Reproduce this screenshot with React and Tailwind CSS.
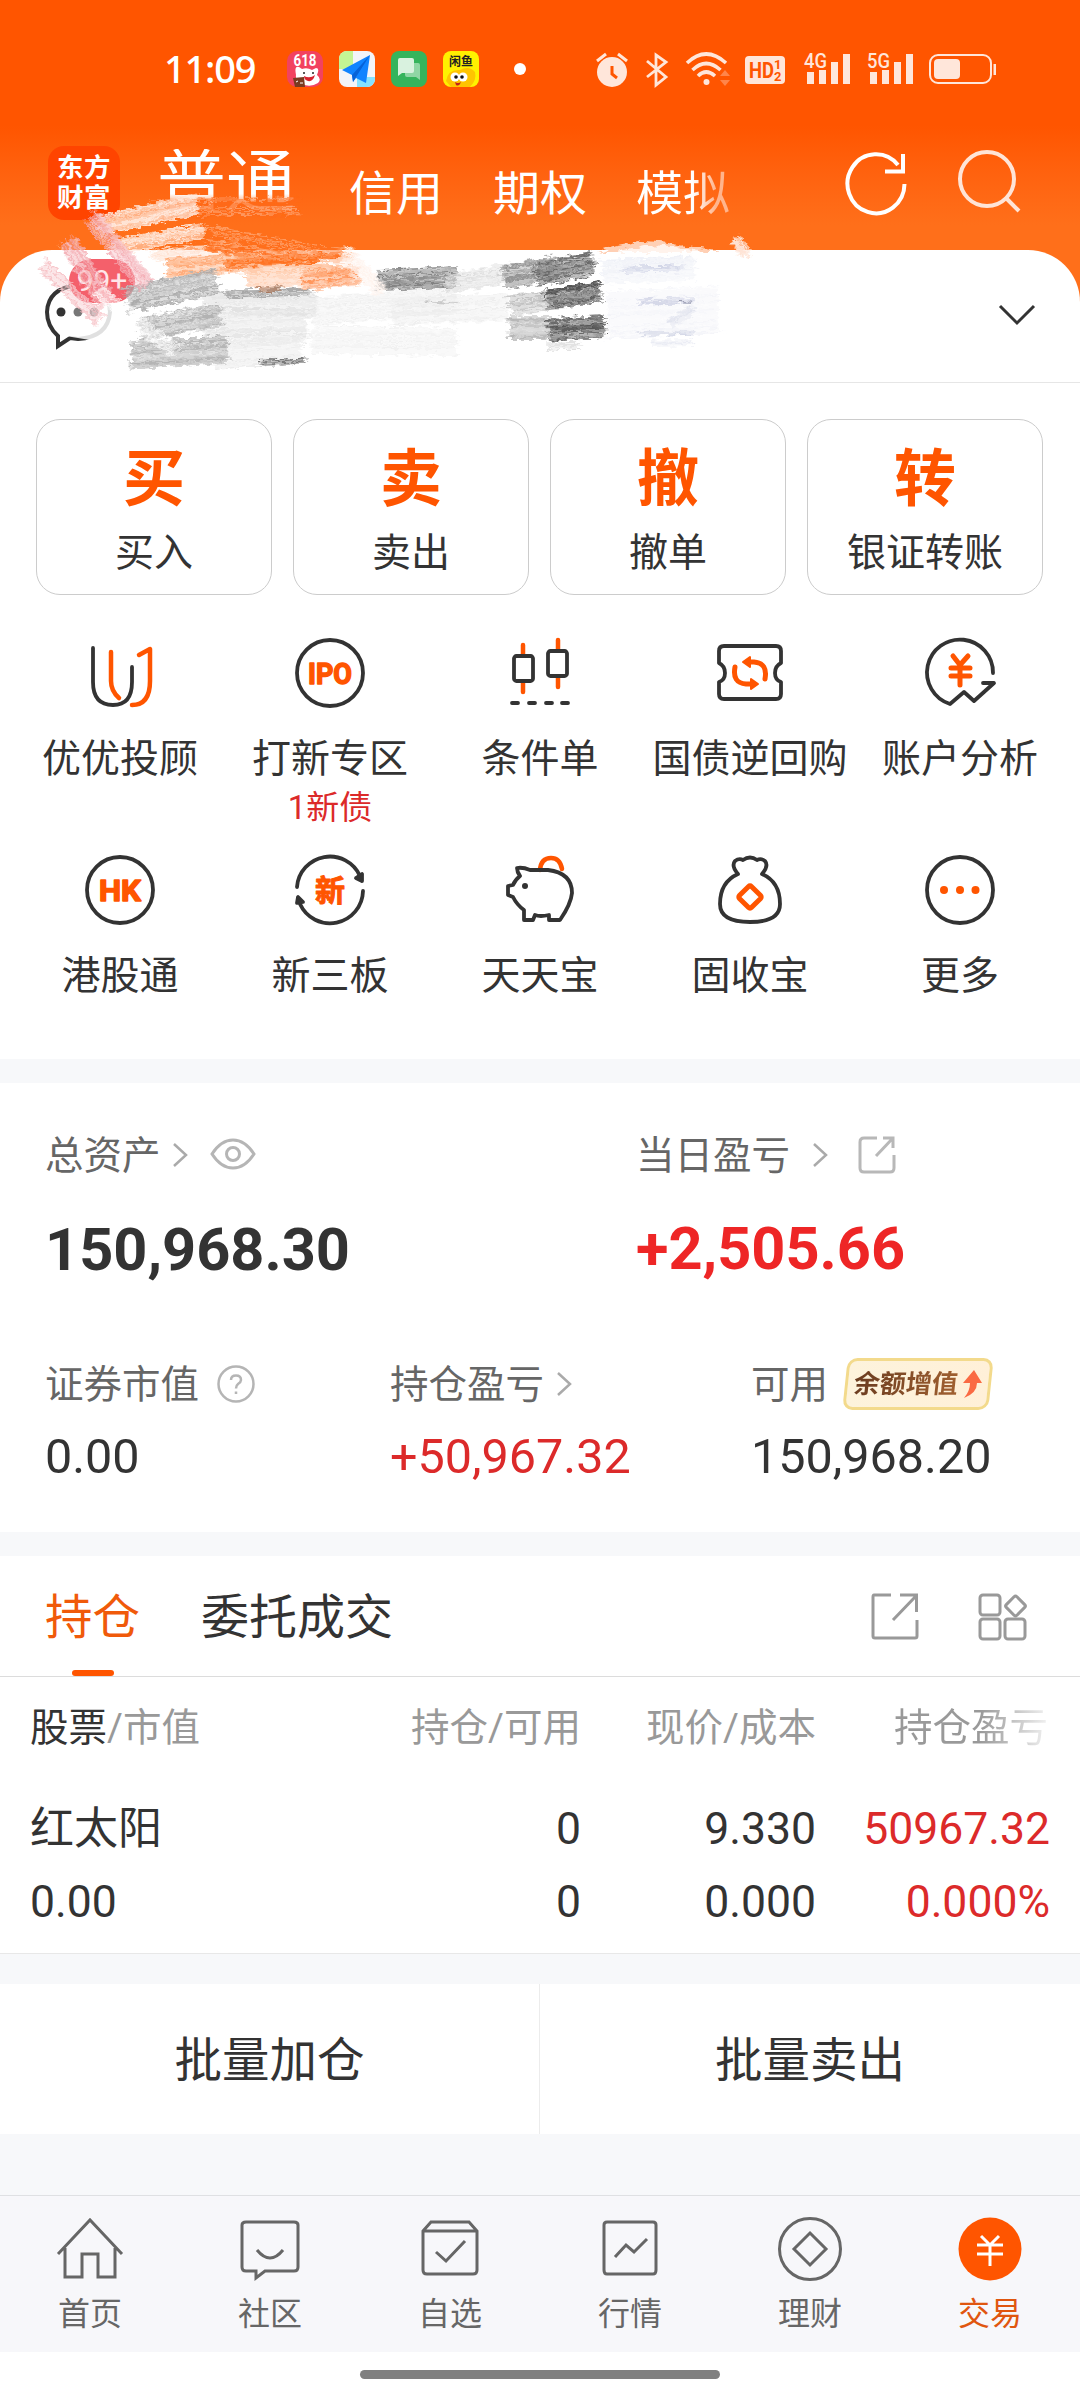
import React from "react";

const DARK = "#333333";
const ORANGE = "#ff5500";

const tradeButtons = [
    { glyph: "买", label: "买入" },
    { glyph: "卖", label: "卖出" },
    { glyph: "撤", label: "撤单" },
    { glyph: "转", label: "银证转账" },
];

/* ---------- Status bar ---------- */

function StatusBar() {
    return (
        <div className="h-[126px] flex items-start pt-[50px] pl-[164px] text-white">
            <span className="w-[123px] h-[36px] flex items-center font-['Noto_Sans'] font-medium text-[38px] tracking-[-1.2px] leading-none">11:09</span>

            {/* Notification icons */}
            <div className="flex gap-4 pt-[1px]">
                <svg width="36" height="36" viewBox="0 0 36 36">
                    <rect width="36" height="36" rx="10" fill="#f2425f" />
                    <text x="18" y="15" fontSize="16" fontWeight="bold" fontFamily="Roboto" textAnchor="middle" fill="#fff" textLength="23" lengthAdjust="spacingAndGlyphs">618</text>
                    <path d="M9 24 Q7 14 12 16 L15 18 Q20 16 25 19 L29 17 Q33 17 30 24 Q35 28 31 32 Q23 37 15 33 Q8 30 9 24Z" fill="#fff" />
                    <circle cx="17" cy="22" r="1" fill="#222" />
                    <circle cx="26" cy="22" r="1" fill="#222" />
                    <path d="M17 25 Q23 28 28 24 Q26 31 21 30 Q17 29 17 25Z" fill="#d8232f" />
                    <path d="M6 27 L17 26 L18 36 L8 36Z" fill="#7a3a20" />
                    <path d="M9 31 l2 -1 M13 32 h3" stroke="#fff" strokeWidth="1" />
                </svg>
                <svg width="36" height="36" viewBox="0 0 36 36">
                    <defs>
                        <clipPath id="mapClip"><rect width="36" height="36" rx="8" /></clipPath>
                    </defs>
                    <g clipPath="url(#mapClip)">
                        <rect width="36" height="36" fill="#f3f4f8" />
                        <rect width="14" height="18" fill="#c4f594" />
                        <rect x="18" y="26" width="18" height="10" fill="#85e2ff" />
                        <path d="M31 4 L3 19 L13 24 L14 31 L17 27 L27 32Z" fill="#1083ff" />
                        <path d="M31 4 L13 24 L14 31 L17 26Z" fill="#0662d8" />
                    </g>
                </svg>
                <svg width="36" height="36" viewBox="0 0 36 36">
                    <rect width="36" height="36" rx="8" fill="#35b45c" />
                    <path d="M14 12 h13 q2 0 2 2 v15 l-4 -3 h-9 q-2 0 -2 -2z" fill="#8fd6a4" />
                    <path d="M9 7 h12 q2 0 2 2 v11 q0 2 -2 2 h-10 l-4 3 v-16 q0 -2 2 -2z" fill="#d9f2df" />
                </svg>
                <svg width="36" height="36" viewBox="0 0 36 36">
                    <rect width="36" height="36" rx="8" fill="#fff100" />
                    <path d="M3 30 Q5 18 17 19 Q26 14 32 21 Q34 29 27 36 L8 36Z" fill="#ffc400" />
                    <text x="18" y="15" fontSize="12" fontWeight="bold" fontFamily="Noto Sans CJK SC" textAnchor="middle" fill="#222">闲鱼</text>
                    <circle cx="12" cy="26" r="4.5" fill="#fff" />
                    <circle cx="20" cy="26" r="4.5" fill="#fff" />
                    <circle cx="13" cy="26" r="1.8" fill="#111" />
                    <circle cx="19" cy="26" r="1.8" fill="#111" />
                    <path d="M12 31 Q15 33 18 31 Q16 36 13 34Z" fill="#c02020" />
                </svg>
            </div>
            <span className="size-3 rounded-full bg-white mt-[13px] ml-[35px]" />

            {/* System icons */}
            <svg className="ml-[66px]" width="408" height="40" viewBox="592 50 408 40" fill="none" stroke="#ffe6da">
                <circle cx="612" cy="72" r="15" fill="#ffe6da" stroke="none" />
                <path d="M597 61 l9 -7 M627 61 l-9 -7" strokeWidth="3" />
                <path d="M612 66 v8 l5 4" stroke={ORANGE} strokeWidth="3" />
                <path d="M647 61 L666 77 L656 85 V55 L666 62 L647 77" strokeWidth="2.8" />
                <path d="M687 63 Q706 45 726 63 M692.500 70 Q706 57 720.500 70 M698 76 Q706 68 715 76" strokeWidth="3.600" />
                <circle cx="706.500" cy="82" r="3" fill="#ffe6da" stroke="none" />
                <path d="M720 76 l5 -6 l5 6z M720 80 l5 6 l5 -6z" fill="#ff854a" stroke="none" />
                <rect x="745" y="56" width="40" height="28" rx="4" fill="#ffe6da" stroke="none" />
                <g fill={ORANGE} stroke="none" fontFamily="Roboto" fontWeight="bold">
                    <text x="749" y="78" fontSize="22" textLength="25" lengthAdjust="spacingAndGlyphs">HD</text>
                    <text x="774" y="69" fontSize="13">1</text>
                    <text x="774" y="81" fontSize="13">2</text>
                </g>
                <g fill="#ffe6da" stroke="none">
                    <g fontFamily="Roboto" fontWeight="500" fontSize="21">
                        <text x="804" y="67.500" textLength="23" lengthAdjust="spacingAndGlyphs">4G</text>
                        <text x="867" y="67.500" textLength="23" lengthAdjust="spacingAndGlyphs">5G</text>
                    </g>
                    <path d="M807 72 h7 v12 h-7z M819 70 h7 v14 h-7z M831 62 h7 v22 h-7z M843 54 h7 v30 h-7z" />
                    <path d="M870 72 h7 v12 h-7z M882 70 h7 v14 h-7z M894 62 h7 v22 h-7z M906 54 h7 v30 h-7z" />
                    <rect x="934" y="59" width="26" height="20" rx="4" />
                    <rect x="993.500" y="64" width="2.500" height="11" />
                </g>
                <rect x="930" y="55" width="61" height="28" rx="8" strokeWidth="2" />
            </svg>
        </div>
    );
}

/* ---------- App bar ---------- */

function AppBar() {
    return (
        <div className="h-[124px] flex items-start pl-12 text-white bg-gradient-to-b from-[#ff5500] to-[#ff6f1a] to-80%">
            <div className="w-[72px] h-[74px] mt-5 rounded-[16px] bg-[#ff4400] flex flex-col items-center justify-center font-bold text-[26.5px] leading-[30px] tracking-[0.5px]">
                <span>东方</span>
                <span>财富</span>
            </div>
            <span className="ml-[37px] mt-[23px] text-[69px] leading-[69px] text-transparent bg-clip-text bg-linear-to-b from-white from-65% to-[#ff9a62] to-80%">普通</span>
            <span className="ml-[54px] mt-[44px] text-[47px] leading-[47px]">信用</span>
            <span className="ml-[50px] mt-[44px] text-[47px] leading-[47px]">期权</span>
            <span className="ml-[49px] mt-[44px] text-[47px] leading-[47px] text-transparent bg-clip-text bg-linear-to-r from-white from-60% to-[#ffb48c] to-85%">模拟</span>

            <svg className="ml-[112px] mt-[22px]" width="66" height="70" viewBox="842 148 66 70" fill="none" stroke="#fff" strokeWidth="4">
                <path d="M904.500 184 A28.500 29.500 0 1 1 898 165" />
                <path d="M903 154 V171.500 H885" />
            </svg>
            <svg className="ml-[46px] mt-[22px]" width="70" height="70" viewBox="954 148 70 70" fill="none" stroke="#ffe4d6" strokeWidth="4">
                <circle cx="987" cy="179" r="27" />
                <path d="M1006 198 L1019 211" />
            </svg>
        </div>
    );
}

/* ---------- Scribble over the account row ---------- */

// [x1, y1, x2, y2, width, colour, opacity, density]
const strokes = [
    [150, 209, 300, 207, 20, "#ff6a1a", 0.6, 1],
    [98, 226, 200, 204, 20, "#ffe9dd", 0.9, 1.2],
    [112, 248, 204, 231, 18, "#ffeade", 0.85, 1.1],
    [150, 256, 240, 246, 12, "#ffe0ce", 0.8, 0.8],
    [205, 238, 340, 262, 26, "#ff6f1d", 0.9, 1.1],
    [165, 268, 262, 261, 20, "#ff9a5e", 0.7, 1],
    [225, 264, 352, 256, 14, "#ff711f", 0.95, 1.3],
    [245, 277, 352, 274, 24, "#ffc9a8", 0.85, 1.1],
    [300, 282, 362, 276, 20, "#ff8440", 0.55, 1],
    [318, 262, 384, 260, 6, "#ffffff", 0.95, 1],
    [200, 302, 318, 304, 26, "#dedede", 0.7, 1.1],
    [205, 328, 308, 326, 34, "#e3e3e3", 0.7, 1.1],
    [212, 356, 302, 348, 30, "#ebebeb", 0.8, 1],
    [225, 295, 312, 291, 9, "#a0a0a0", 0.8, 1.2],
    [258, 290, 282, 288, 5, "#a86a48", 0.8, 1],
    [125, 300, 218, 281, 25, "#a8a8a8", 0.85, 1.6],
    [138, 330, 222, 313, 23, "#b0b0b0", 0.85, 1.6],
    [130, 356, 228, 349, 27, "#b0b0b0", 0.85, 1.6],
    [260, 363, 306, 360, 7, "#777777", 0.95, 1.6],
    [310, 312, 458, 300, 30, "#ebebeb", 0.6, 0.7],
    [310, 340, 458, 342, 30, "#eeeeee", 0.6, 0.7],
    [390, 312, 510, 306, 28, "#e9e9e9", 0.6, 0.5],
    [420, 301, 460, 304, 4, "#b9b9b9", 0.6, 0.8],
    [376, 280, 458, 276, 22, "#7d7d7d", 0.9, 1.5],
    [445, 284, 520, 272, 22, "#dddddd", 0.8, 1],
    [502, 278, 560, 267, 24, "#8e8e8e", 0.85, 1.5],
    [535, 275, 594, 262, 24, "#666666", 0.9, 1.6],
    [508, 306, 560, 299, 22, "#bcbcbc", 0.8, 1.1],
    [545, 300, 602, 291, 22, "#545454", 0.95, 1.7],
    [508, 328, 560, 328, 26, "#b0b0b0", 0.8, 1.1],
    [548, 330, 606, 327, 24, "#545454", 0.95, 1.7],
    [545, 346, 580, 346, 7, "#d8d8d8", 0.8, 0.8],
    [602, 272, 696, 268, 24, "#eef0f7", 0.8, 0.8],
    [618, 270, 682, 268, 6, "#cfd3e6", 0.8, 1],
    [606, 316, 720, 310, 48, "#f3f4f9", 0.7, 0.6],
    [638, 302, 698, 300, 8, "#d3d6e7", 0.8, 0.9],
    [672, 302, 692, 302, 2, "#888ba0", 0.8, 1],
    [668, 326, 694, 308, 12, "#dcdfeb", 0.6, 0.6],
    [636, 333, 696, 333, 5, "#cfd3e4", 0.8, 0.9],
    [650, 344, 694, 343, 8, "#e8eaf3", 0.8, 0.8],
    [735, 238, 748, 256, 14, "#ffe4d6", 0.95, 1.4],
    [344, 250, 384, 294, 16, "#fff4ee", 0.9, 1],
    [90, 216, 148, 286, 20, "#f3a9b1", 0.75, 1.2],
    [66, 240, 108, 306, 20, "#f3a9b0", 0.75, 1.2],
    [42, 264, 100, 320, 16, "#f6bcc1", 0.7, 1],
    [96, 290, 176, 352, 13, "#ffffff", 0.7, 0.9],
];

function makeRandom(seed) {
    let s = seed;
    return () => {
        s = (s * 16807) % 2147483647;
        return s / 2147483647;
    };
}

function BrushStroke({ stroke, seed }) {
    const [x1, y1, x2, y2, width, color, opacity, density] = stroke;
    const rand = makeRandom(seed * 7919 + 13);
    const len = Math.hypot(x2 - x1, y2 - y1);
    const angle = (Math.atan2(y2 - y1, x2 - x1) * 180) / Math.PI;
    const count = Math.round(width * density);
    // bristles are split in three layers so that they differ in strength
    const layers = ["", "", ""];
    for (let i = 0; i < count; i++) {
        const y = (rand() - 0.5) * width;
        const a = rand() * 10 - 3;
        const b = len - rand() * 9 + 3;
        layers[i % 3] += `M${a.toFixed(1)} ${y.toFixed(1)}L${b.toFixed(1)} ${(y + rand() * 2 - 1).toFixed(1)}`;
    }
    return (
        <g transform={`translate(${x1} ${y1}) rotate(${angle})`} stroke={color} fill={color} strokeWidth="1">
            <rect x="2" y={-width / 2 + 1} width={Math.max(len - 4, 2)} height={width - 2} stroke="none" opacity={opacity * 0.6} />
            <path d={layers[0]} opacity={opacity} />
            <path d={layers[1]} opacity={opacity * 0.6} />
            <path d={layers[2]} stroke="#fff" opacity="0.3" />
        </g>
    );
}

function Scribble() {
    return (
        <svg className="absolute left-0 top-0 pointer-events-none" width="1080" height="400" viewBox="0 0 1080 400">
            <defs>
                <filter id="bristle" x="0" y="0" width="1080" height="400" filterUnits="userSpaceOnUse">
                    <feTurbulence type="fractalNoise" baseFrequency="0.12 0.3" numOctaves="2" seed="4" result="noise" />
                    <feDisplacementMap in="SourceGraphic" in2="noise" scale="9" xChannelSelector="R" yChannelSelector="G" />
                </filter>
            </defs>
            <g filter="url(#bristle)">
                <path d="M598 252 L612 247 L628 244 L640 241 L662 242 L680 245 L700 248 L722 252Z" fill="#ffd0b5" />
                <path d="M615 252 L645 245 L670 246 L705 252Z" fill="#fff3ec" />
                {strokes.map((stroke, i) => (
                    <BrushStroke key={i} stroke={stroke} seed={i + 1} />
                ))}
            </g>
        </svg>
    );
}

function AccountRow() {
    return (
        <div className="h-[133px] border-b border-[#e6e6e6] flex items-start justify-between">
            <svg width="160" height="132" viewBox="0 250 160 132">
                <path d="M58 336 Q47 326 47 312 Q48 288 78 285 Q109 288 110 312 Q108 337 78 339 L70 338 L58 346Z" fill="none" stroke={DARK} strokeWidth="4" />
                <path d="M84 325 L114 292 L120 345 L66 336Z" fill="#fff" opacity="0.85" />
                <circle cx="61" cy="312" r="4.500" fill={DARK} />
                <circle cx="78" cy="312" r="4.500" fill="#777" />
                <circle cx="94" cy="312" r="4.500" fill="#999" />
                <rect x="69" y="259" width="66" height="44" rx="22" fill="#f4606b" />
                <text x="102" y="291" fontSize="30" textAnchor="middle" fill="#ffe5e8" fontFamily="Roboto">99+</text>
            </svg>
            <svg className="mr-[43px] mt-[52px]" width="40" height="26" viewBox="0 0 40 26" fill="none" stroke={DARK} strokeWidth="3">
                <path d="M3 4 L20 21 L37 4" />
            </svg>
        </div>
    );
}

/* ---------- Quick entries ---------- */

function Icon({ children }) {
    return (
        <svg width="76" height="76" viewBox="-38 -38 76 76" fill="none" stroke={DARK} strokeWidth="3.800" strokeLinecap="round" strokeLinejoin="round">
            {children}
        </svg>
    );
}

const entries = [
    {
        label: "优优投顾",
        icon: (
            <>
                <path d="M-27 -25 V9 Q-27 32 -7 32 Q12 32 12 9 V-6" />
                <path d="M-9 -21 V8 Q-9 18 -1 25" stroke={ORANGE} strokeWidth="4.500" />
                <path d="M19 -18 L30 -24 V8 Q30 32 12 32" stroke={ORANGE} strokeWidth="4.500" />
            </>
        ),
    },
    {
        label: "打新专区",
        note: "1新债",
        icon: (
            <>
                <circle r="33" />
                <text y="11" fontSize="30" fontWeight="bold" fontFamily="Roboto" textAnchor="middle" textLength="44" lengthAdjust="spacingAndGlyphs" fill={ORANGE} stroke={ORANGE} strokeWidth="1.500">IPO</text>
            </>
        ),
    },
    {
        label: "条件单",
        icon: (
            <>
                <path d="M-17 -28 V19 M18 -33 V14" stroke={ORANGE} strokeWidth="4.500" />
                <rect x="-26" y="-17" width="19" height="25" rx="2.500" fill="#fff" />
                <rect x="8" y="-22" width="19" height="25" rx="2.500" fill="#fff" />
                <path d="M-28 30 h6 M-11 30 h6 M6 30 h6 M22 30 h6" />
            </>
        ),
    },
    {
        label: "国债逆回购",
        icon: (
            <>
                <path d="M-26 -27 H26 Q31 -27 31 -22 V-10 Q25 -7 25 0 Q25 7 31 9 V21 Q31 26 26 26 H-26 Q-31 26 -31 21 V9 Q-25 7 -25 0 Q-25 -7 -31 -10 V-22 Q-31 -27 -26 -27Z" />
                <path d="M-15 -6 Q-18 10 -4 11 H1 M-1 -11 H4 Q18 -10 15 6" stroke={ORANGE} strokeWidth="5" />
                <path d="M-7 -11 L0 -16 V-6Z M8 11 L1 6 V16Z" fill={ORANGE} stroke={ORANGE} strokeWidth="2" />
            </>
        ),
    },
    {
        label: "账户分析",
        icon: (
            <>
                <path d="M33 0 A33 33 0 1 0 -10 31 L4 19 L14 28 L34 10 H23" />
                <path d="M-7 -17 L0 -8 L8 -17 M0 -8 V12 M-9 -5 H10 M-9 3 H10" stroke={ORANGE} strokeWidth="5" />
            </>
        ),
    },
    {
        label: "港股通",
        icon: (
            <>
                <circle r="33" />
                <text y="11" fontSize="30" fontWeight="bold" fontFamily="Roboto" textAnchor="middle" textLength="42" lengthAdjust="spacingAndGlyphs" fill={ORANGE} stroke={ORANGE} strokeWidth="1.500">HK</text>
            </>
        ),
    },
    {
        label: "新三板",
        icon: (
            <>
                <path d="M-33 -3 A33 33 0 0 1 30 -14 M33 1 A33 33 0 0 1 -30 14" />
                <path d="M32 -9 L26 -12 L32 -16Z M-32 7 L-33 13 L-27 12Z" fill={DARK} />
                <text y="11" fontSize="30" fontWeight="bold" fontFamily="Noto Sans CJK SC" textAnchor="middle" fill={ORANGE} stroke={ORANGE} strokeWidth="1">新</text>
            </>
        ),
    },
    {
        label: "天天宝",
        icon: (
            <>
                <path d="M0 -20 Q1 -32 11 -32 Q20 -32 22 -21" stroke={ORANGE} strokeWidth="4.500" />
                <path d="M-10 -20 H8 Q32 -17 32 3 Q31 14 20 30 H9 V25 Q0 27 -5 25 L-7 30 H-16 V20 Q-23 15 -27 7 L-32 5 V-4 L-27 -5 Q-25 -10 -20 -14 Q-23 -18 -23 -22 Q-17 -23 -10 -20Z" />
                <circle cx="-15" cy="-4" r="3" fill={DARK} stroke="none" />
            </>
        ),
    },
    {
        label: "固收宝",
        icon: (
            <>
                <path d="M-12 -16 Q-19 -24 -15 -29 Q-11 -32 -7 -30 Q0 -35 7 -30 Q11 -32 15 -29 Q19 -24 12 -16 Q30 -8 30 14 Q30 32 0 32 Q-30 32 -30 14 Q-30 -8 -12 -16Z" />
                <rect x="-8.500" y="-8.500" width="17" height="17" rx="2" transform="translate(0 7) rotate(45)" stroke={ORANGE} strokeWidth="5" />
            </>
        ),
    },
    {
        label: "更多",
        icon: (
            <>
                <circle r="33" />
                <g fill={ORANGE} stroke="none">
                    <circle cx="-16" r="4" />
                    <circle r="4" />
                    <circle cx="15.500" r="4" />
                </g>
            </>
        ),
    },
];

function QuickEntries() {
    return (
        <div className="grid grid-cols-5 px-[15px] pt-[40px]">
            {entries.map((entry) => (
                <div key={entry.label} className="h-[217px] flex flex-col items-center text-[#333333] whitespace-nowrap">
                    <Icon>{entry.icon}</Icon>
                    <span className="mt-[29px] text-[39px] leading-[39px]">{entry.label}</span>
                    {entry.note && <span className="mt-[12px] text-[33px] leading-[33px] text-[#dc2a2a]">{entry.note}</span>}
                </div>
            ))}
        </div>
    );
}

/* ---------- Assets ---------- */

function Chevron({ className }) {
    return (
        <svg className={className} width="16" height="26" viewBox="0 0 16 26" fill="none" stroke="#aaaaaa" strokeWidth="2.500">
            <path d="M2 2 L14 13 L2 24" />
        </svg>
    );
}

function Assets() {
    return (
        <section className="h-[449px] bg-white pt-[52px] text-[38.500px] leading-[39px] text-[#666666]">
            <div className="flex px-[45px]">
                <div className="w-[591px]">
                    <div className="flex items-center h-[40px]">
                        <span>总资产</span>
                        <Chevron className="ml-[11px]" />
                        <svg className="ml-[22px]" width="46" height="34" viewBox="0 0 46 34" fill="none" stroke="#b5b5b5" strokeWidth="3">
                            <path d="M2 16 Q11 2 23 2 Q35 2 44 16 Q35 30 23 30 Q11 30 2 16Z" />
                            <circle cx="23" cy="16" r="6.500" />
                        </svg>
                    </div>
                    <div className="mt-[45px] text-[59.500px] leading-[60px] font-bold text-[#333333]">150,968.30</div>
                </div>
                <div>
                    <div className="flex items-center h-[40px]">
                        <span>当日盈亏</span>
                        <Chevron className="ml-[22px]" />
                        <svg className="ml-[30px]" width="38" height="40" viewBox="0 0 38 40" fill="none" stroke="#b8b8b8" strokeWidth="3">
                            <path d="M19 3 H6 Q2 3 2 7 V33 Q2 37 6 37 H32 Q36 37 36 33 V20 M25 3 H35 V13 M35 3 L18 21" />
                        </svg>
                    </div>
                    <div className="mt-[44px] text-[59.500px] leading-[60px] font-bold text-[#ee2626]">+2,505.66</div>
                </div>
            </div>

            <div className="flex pl-[45px] pt-[78px]">
                <div className="w-[345px]">
                    <div className="flex items-center h-[52px]">
                        <span>证券市值</span>
                        <svg className="ml-[17px]" width="40" height="40" viewBox="0 0 40 40" fill="none" stroke="#b5b5b5" strokeWidth="2.500">
                            <circle cx="20" cy="20" r="17.500" />
                            <path d="M15 16 Q15 11.500 20 11.500 Q25 11.500 25 16 Q25 18 22 20 Q20 21.500 20 24.500 M20 27.500 V30" />
                        </svg>
                    </div>
                    <div className="mt-[22px] text-[48.500px] leading-[49px] text-[#333333]">0.00</div>
                </div>
                <div className="w-[361px]">
                    <div className="flex items-center h-[52px]">
                        <span>持仓盈亏</span>
                        <Chevron className="ml-[12px]" />
                    </div>
                    <div className="mt-[22px] text-[48.500px] leading-[49px] text-[#dc2a2a]">+50,967.32</div>
                </div>
                <div>
                    <div className="flex items-center h-[52px]">
                        <span>可用</span>
                        <div className="relative ml-[14px] w-[152px] h-[52px]">
                            <div className="absolute inset-x-[3px] inset-y-0 -skew-x-6 rounded-[10px] border-[3px] border-[#f3da8c] bg-linear-to-r from-[#fdf3dc] to-[#fff0d8]" />
                            <div className="relative h-full flex items-center pl-[12px]">
                                <span className="text-[26px] leading-none font-bold -skew-x-6 text-transparent bg-clip-text bg-linear-to-r from-[#6b3c20] to-[#a06030]">余额增值</span>
                                <svg className="ml-[3px]" width="22" height="30" viewBox="0 0 22 30">
                                    <path d="M13 1 L21 14 H16 Q16 24 3 29 Q9 22 9 14 H2Z" fill="#fa6a43" />
                                </svg>
                            </div>
                        </div>
                    </div>
                    <div className="mt-[22px] text-[48.500px] leading-[49px] text-[#333333]">150,968.20</div>
                </div>
            </div>
        </section>
    );
}

/* ---------- Positions ---------- */

function Positions() {
    return (
        <section className="h-[398px] bg-white border-b border-[#e8e8e8]">
            <div className="h-[121px] border-b border-[#dcdcdc] flex items-start pl-[45px]">
                <div className="h-[120px] flex flex-col items-center justify-between text-[#f05a0a]">
                    <span className="mt-[38px] text-[47.500px] leading-[48px]">持仓</span>
                    <span className="w-[42px] h-[6px] rounded-[3px] bg-[#ff5500]" />
                </div>
                <span className="ml-[61px] mt-[38px] text-[48px] leading-[48px] text-[#333333]">委托成交</span>
                <svg className="ml-[478px] mt-[35px]" width="48" height="50" viewBox="0 0 48 50" fill="none" stroke="#999999" strokeWidth="3">
                    <path d="M20 4 H3 Q2 4 2 6 V45 Q2 47 4 47 H44 Q46 47 46 45 V29 M29 4 H45.500 V21 M45 5 L22 29" />
                </svg>
                <svg className="ml-[58px] mt-[35px]" width="54" height="52" viewBox="0 0 54 52" fill="none" stroke="#999999" strokeWidth="3">
                    <rect x="3" y="4" width="20" height="20" rx="3" />
                    <rect x="3" y="28" width="20" height="20" rx="3" />
                    <rect x="28" y="28" width="20" height="20" rx="3" />
                    <rect x="-7.500" y="-7.500" width="15" height="15" rx="2" transform="translate(38.500 15) rotate(45)" />
                </svg>
            </div>

            <div className="grid grid-cols-[214px_337px_235px_234px] pl-[30px] pt-[31px] text-right text-[38.500px] leading-[39px] text-[#999999]">
                <span className="text-left"><span className="text-[#333333]">股票</span>/市值</span>
                <span>持仓/可用</span>
                <span>现价/成本</span>
                <span className="pl-[78px] text-left whitespace-nowrap text-transparent bg-clip-text bg-linear-to-r from-[#999999] from-70% to-[#f4f4f4] to-100%">持仓盈亏</span>
            </div>

            <div className="grid grid-cols-[214px_337px_235px_234px] pl-[30px] pt-[59px] gap-y-[27px] text-right text-[44.500px] leading-[46px] text-[#333333]">
                <span className="text-left text-[44px]">红太阳</span>
                <span>0</span>
                <span>9.330</span>
                <span className="text-[#dc2a2a]">50967.32</span>
                <span className="text-left">0.00</span>
                <span>0</span>
                <span>0.000</span>
                <span className="text-[#dc2a2a]">0.000%</span>
            </div>
        </section>
    );
}

/* ---------- Bottom navigation ---------- */

const navItems = [
    {
        label: "首页",
        icon: <path d="M-32 5 L0 -29 L32 5 M-25 -1 V28 H-8 V5 H8 V28 H25 V-1" />,
    },
    {
        label: "社区",
        icon: <path d="M-24 -27 H24 Q28 -27 28 -24 V18 Q28 22 24 22 H-5 L-14 29 V22 H-24 Q-28 22 -28 18 V-24 Q-28 -27 -24 -27Z M-13 1 Q0 17 13 1" />,
    },
    {
        label: "自选",
        icon: <path d="M-27 -18 L-19 -27 H19 L27 -18 V21 Q27 25 23 25 H-23 Q-27 25 -27 21Z M-27 -18 H27 M-14 3 L-4 12 L15 -8" />,
    },
    {
        label: "行情",
        icon: <path d="M-23 -27 H23 Q26 -27 26 -24 V21 Q26 25 23 25 H-23 Q-26 25 -26 21 V-24 Q-26 -27 -23 -27Z M-15 8 L-4 -4 L4 3 L17 -10" />,
    },
    {
        label: "理财",
        icon: (
            <>
                <circle r="30.500" />
                <path d="M0 -16 L16 0 L0 16 L-16 0Z" />
            </>
        ),
    },
    {
        label: "交易",
        active: true,
        icon: (
            <>
                <circle r="31.500" fill={ORANGE} stroke="none" />
                <path d="M-9 -13 L0 -4 L9 -13 M0 -4 V17 M-13 -4 H13 M-13 5 H13" stroke="#fff" strokeWidth="3" />
            </>
        ),
    },
];

function BottomNav() {
    return (
        <nav className="h-[157px] border-t border-[#dfe0e3] bg-[#f7f7fa] grid grid-cols-6">
            {navItems.map((item) => (
                <div key={item.label} className={item.active ? "flex flex-col items-center pt-[19px] text-[#e0560f]" : "flex flex-col items-center pt-[19px] text-[#666666]"}>
                    <svg width="68" height="68" viewBox="-34 -34 68 68" fill="none" stroke="#666666" strokeWidth="3">
                        {item.icon}
                    </svg>
                    <span className="mt-[15px] text-[32px] leading-[32px]">{item.label}</span>
                </div>
            ))}
        </nav>
    );
}

export default function App() {
    return (
        <div className="relative w-[1080px] h-[2400px] overflow-hidden bg-[#f7f8fa] font-[Roboto,'Noto_Sans_CJK_SC',sans-serif]">
            <header className="bg-[#ff5500]">
                <StatusBar />
                <AppBar />
            </header>

            <div className="bg-[#ff6f1a]">
                <main className="h-[809px] rounded-t-[52px] bg-white">
                    <AccountRow />
                    <div className="grid grid-cols-4 gap-[21px] pl-[36px] pr-[37px] pt-[36px]">
                        {tradeButtons.map((btn) => (
                            <button key={btn.label} className="h-[176px] rounded-[24px] border border-[#cccccc] flex flex-col items-center">
                                <span className="mt-[29px] text-[62px] leading-[62px] font-bold text-[#ff5500]">{btn.glyph}</span>
                                <span className="mt-[23px] text-[39px] leading-[39px] text-[#333333]">{btn.label}</span>
                            </button>
                        ))}
                    </div>
                    <QuickEntries />
                </main>
            </div>

            <div className="h-6" />
            <Assets />
            <div className="h-6" />
            <Positions />

            <div className="mt-[30px] h-[150px] bg-white grid grid-cols-2 text-[47.500px] text-[#333333]">
                <div className="flex items-center justify-center border-r border-[#ececec] pt-[5px]">批量加仓</div>
                <div className="flex items-center justify-center pt-[5px]">批量卖出</div>
            </div>

            <div className="h-[61px]" />
            <BottomNav />
            <div className="h-12 bg-white flex justify-center pt-[18px]">
                <span className="w-[360px] h-[9px] rounded-full bg-[#808080]" />
            </div>

            <Scribble />
        </div>
    );
}
